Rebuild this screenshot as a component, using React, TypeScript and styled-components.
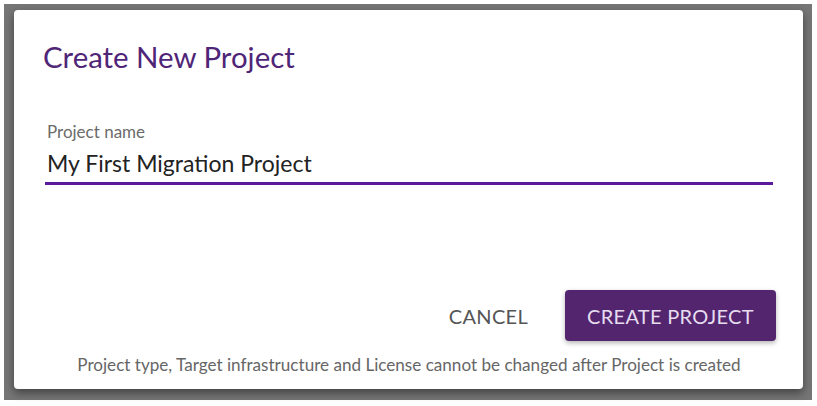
import React from "react";
import styled, { createGlobalStyle } from "styled-components";

const GlobalStyle = createGlobalStyle`
  html, body {
    margin: 0;
    padding: 0;
    background: #ffffff;
  }
  body {
    font-family: Lato, "Open Sans", sans-serif;
  }
`;

const Backdrop = styled.div`
  box-sizing: border-box;
  margin: 4px 5px 6px 4px;
  height: 396px;
  background: #767676;
  padding: 6px 9px 0 10px;
`;

const Dialog = styled.div`
  box-sizing: border-box;
  height: 379px;
  background: #ffffff;
  border-radius: 4px;
  box-shadow: 0 4px 10px rgba(0, 0, 0, 0.45);
  padding: 28px 30px 0 31px;
  display: flex;
  flex-direction: column;
`;

const Title = styled.h2`
  margin: 0 0 0 -2px;
  font-size: 29.4px;
  font-weight: 400;
  color: #4f2577;
  line-height: 38px;
`;

const Field = styled.div`
  margin-top: 46px;
  display: flex;
  flex-direction: column;
`;

const Label = styled.label`
  font-size: 17px;
  color: #6b6b6b;
  padding-left: 2px;
  line-height: 20px;
`;

const Input = styled.input`
  font-family: Lato, "Open Sans", sans-serif;
  font-size: 23px;
  color: #222;
  border: none;
  border-bottom: 3px solid #5b1a9c;
  padding: 5px 0 5px 2px;
  margin-top: 2px;
  outline: none;
  background: transparent;
  line-height: 28px;
`;

const Actions = styled.div`
  margin-top: auto;
  margin-right: -3px;
  display: flex;
  justify-content: flex-end;
  align-items: center;
  gap: 37px;
`;

const TextButton = styled.button`
  font-family: Lato, "Open Sans", sans-serif;
  font-size: 20px;
  color: #555;
  background: none;
  border: none;
  padding: 0;
  letter-spacing: 0.3px;
  cursor: pointer;
`;

const PrimaryButton = styled.button`
  font-family: Lato, "Open Sans", sans-serif;
  font-size: 20px;
  color: #e6def0;
  background: #54256f;
  border: none;
  border-radius: 4px;
  width: 211px;
  height: 51px;
  letter-spacing: 0.3px;
  box-shadow: 0 2px 5px rgba(0, 0, 0, 0.3);
  cursor: pointer;
`;

const Note = styled.p`
  margin: 13px 0 13px;
  text-align: center;
  font-size: 17.1px;
  color: #666;
  line-height: 22px;
`;

export default function App() {
  return (
    <>
      <GlobalStyle />
      <Backdrop>
        <Dialog>
          <Title>Create New Project</Title>
          <Field>
            <Label>Project name</Label>
            <Input defaultValue="My First Migration Project" />
          </Field>
          <Actions>
            <TextButton>CANCEL</TextButton>
            <PrimaryButton>CREATE PROJECT</PrimaryButton>
          </Actions>
          <Note>
            Project type, Target infrastructure and License cannot be changed
            after Project is created
          </Note>
        </Dialog>
      </Backdrop>
    </>
  );
}
